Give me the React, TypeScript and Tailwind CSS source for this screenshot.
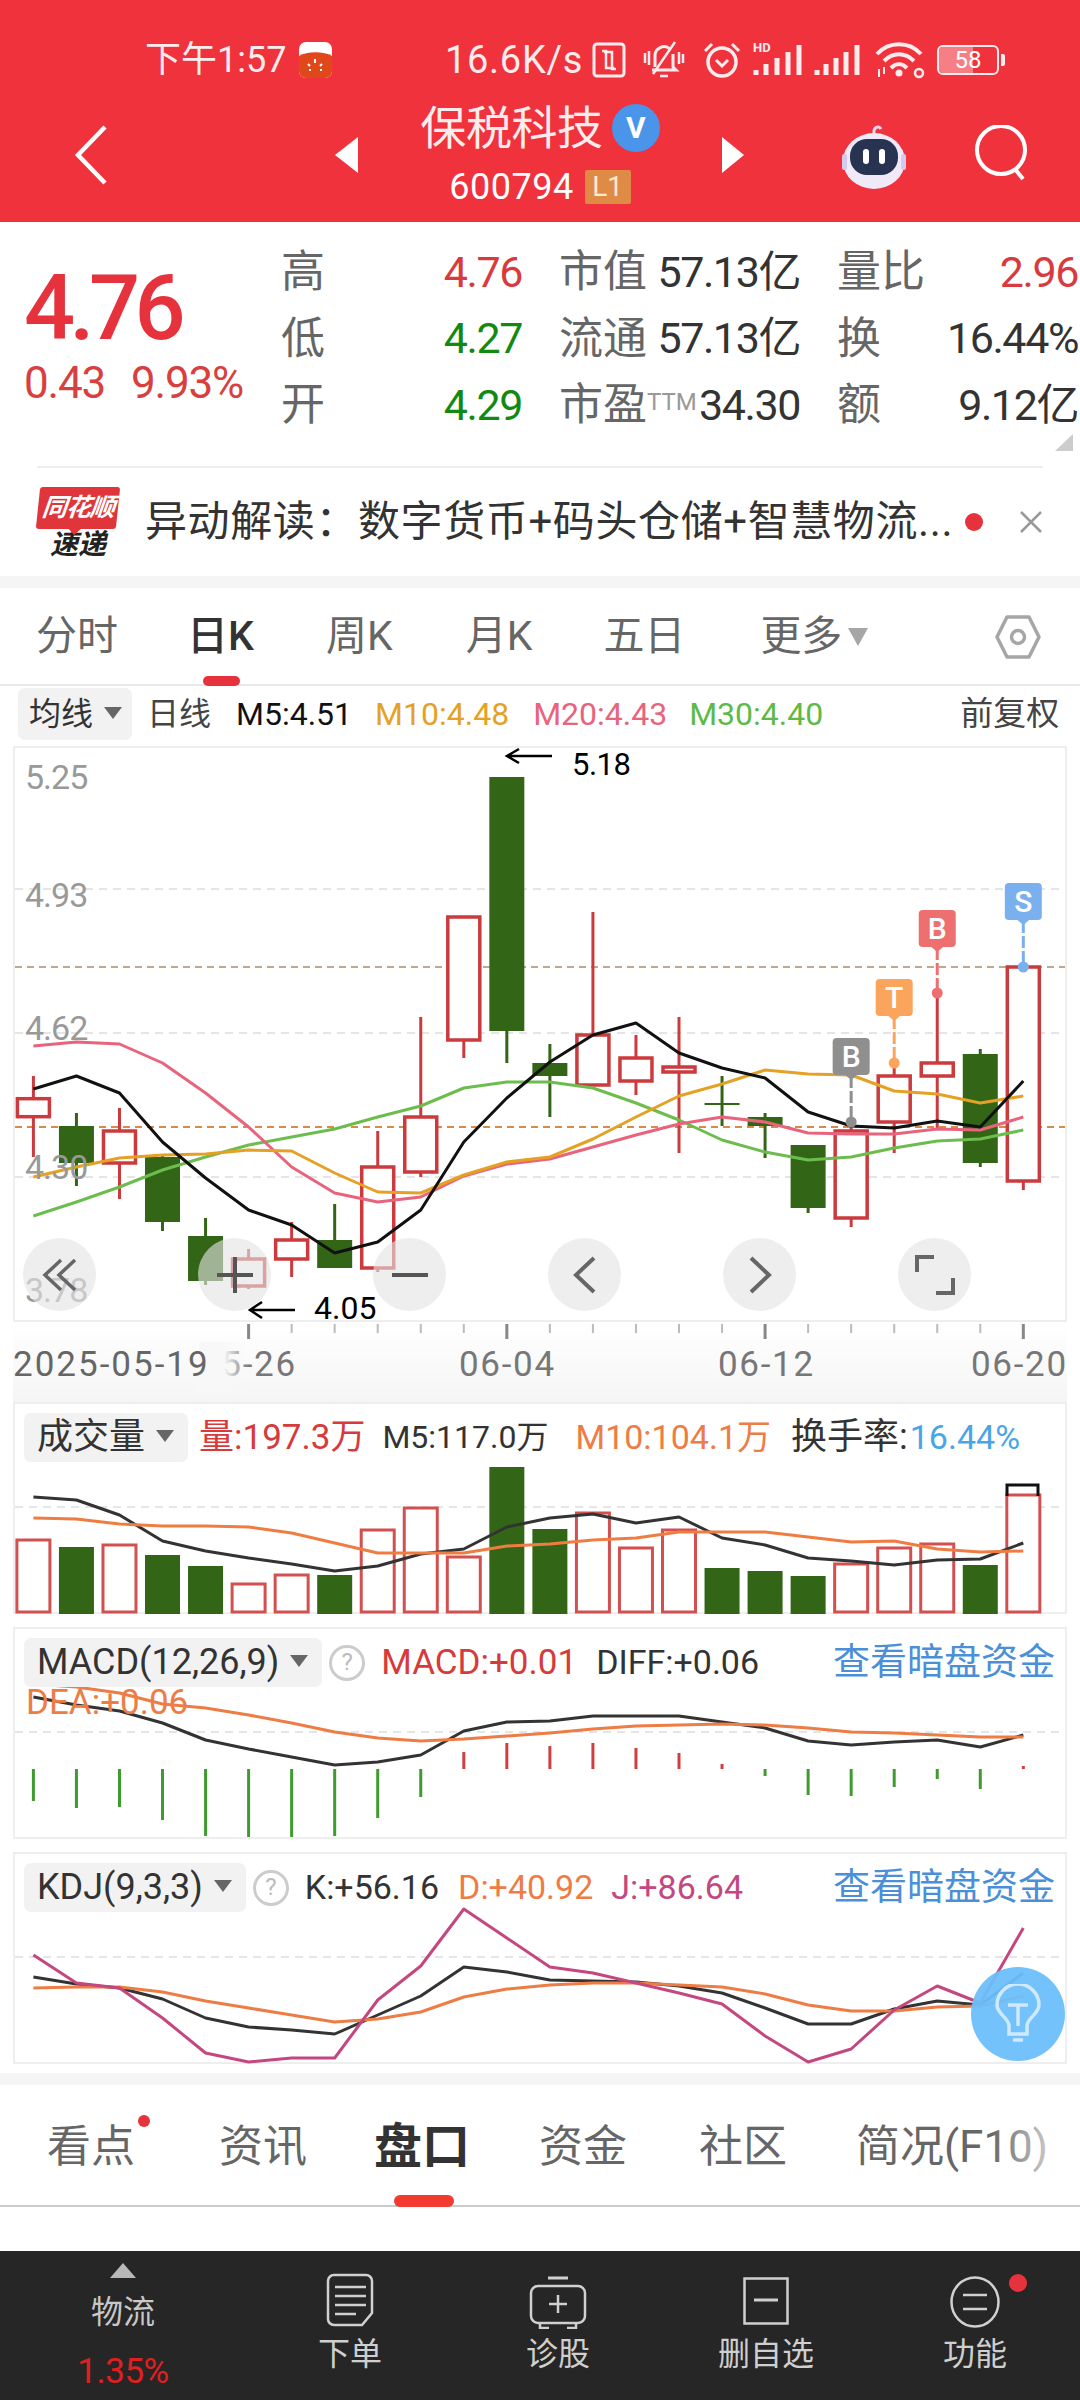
const cx = (i: number) => 33.4 + 43.04 * i;

type C = [number, number, number, number, 'r' | 'g'];
const candles: C[] = [
  [1098.7, 1116.7, 1076, 1157, 'r'], [1126, 1163, 1113, 1186, 'g'], [1131, 1163, 1108, 1199, 'r'], [1157, 1222, 1156, 1231, 'g'],
  [1236, 1281, 1218, 1285, 'g'], [1259, 1286, 1249, 1289, 'r'], [1240, 1259, 1222, 1277, 'r'], [1240, 1268, 1204, 1268, 'g'],
  [1167, 1268, 1131, 1272, 'r'], [1117, 1172, 1017, 1177, 'r'], [917, 1040, 917, 1058, 'r'], [777, 1031, 777, 1063, 'g'],
  [1063, 1076, 1044, 1117, 'g'], [1035, 1085, 912, 1085, 'r'], [1058, 1081, 1035, 1095, 'r'], [1067, 1072, 1017, 1153, 'r'],
  [1103, 1105, 1076, 1126, 'g'], [1117, 1126, 1113, 1158, 'g'], [1145, 1208, 1145, 1213, 'g'], [1131, 1218, 1127, 1227, 'r'],
  [1076, 1122, 1063, 1153, 'r'], [1063, 1076, 993, 1130, 'r'], [1054, 1163, 1049, 1167, 'g'], [967, 1181, 967, 1190, 'r'],
];
const ma5 = [1089, 1076, 1093, 1142, 1178, 1210, 1225, 1253, 1242, 1210, 1142, 1098, 1062, 1035, 1023, 1053, 1068, 1078, 1112, 1126, 1128, 1121, 1127, 1081];
const ma10 = [1177, 1167, 1158, 1155, 1154, 1150, 1151, 1173, 1192, 1193, 1175, 1162, 1157, 1139, 1117, 1096, 1084, 1070, 1074, 1075, 1091, 1094, 1103, 1096];
const ma20 = [1046, 1042, 1044, 1063, 1093, 1127, 1167, 1193, 1202, 1197, 1176, 1164, 1159, 1147, 1135, 1124, 1117, 1122, 1133, 1134, 1134, 1129, 1130, 1117];
const ma30 = [1216, 1202, 1187, 1170, 1157, 1145, 1137, 1129, 1117, 1106, 1088, 1082, 1082, 1088, 1103, 1120, 1140, 1152, 1160, 1157, 1148, 1141, 1139, 1130];
const volTops: [number, 'r' | 'g'][] = [[1540, 'r'], [1547, 'g'], [1545, 'r'], [1555, 'g'], [1566, 'g'], [1584, 'r'], [1575, 'r'], [1575, 'g'], [1530, 'r'], [1508, 'r'], [1557, 'r'], [1467, 'g'], [1529, 'g'], [1513, 'r'], [1548, 'r'], [1530, 'r'], [1568, 'g'], [1571, 'g'], [1576, 'g'], [1564, 'r'], [1548, 'r'], [1544, 'r'], [1565, 'g'], [1495, 'r']];
const volM5 = [1497, 1500, 1515, 1541, 1551, 1558, 1564, 1571, 1566, 1554, 1549, 1527, 1518, 1514, 1523, 1517, 1538, 1545, 1558, 1561, 1565, 1560, 1559, 1543];
const volM10 = [1518, 1519, 1524, 1526, 1526, 1527, 1533, 1543, 1553, 1553, 1553, 1546, 1544, 1540, 1538, 1532, 1532, 1532, 1537, 1542, 1541, 1549, 1552, 1551];
const macdBars = [1801, 1808, 1807, 1820, 1836, 1837, 1837, 1836, 1818, 1797, 1752, 1743, 1746, 1743, 1748, 1753, 1764, 1776, 1795, 1796, 1787, 1779, 1789, 1766];
const diff = [1697, 1705, 1711, 1723, 1740, 1749, 1757, 1765, 1762, 1755, 1731, 1722, 1721, 1716, 1716, 1716, 1722, 1728, 1741, 1745, 1742, 1740, 1747, 1735];
const dea = [1684, 1687, 1693, 1704, 1708, 1715, 1723, 1732, 1738, 1741, 1739, 1736, 1733, 1729, 1726, 1725, 1724, 1725, 1728, 1732, 1733, 1735, 1737, 1737];
const kLine = [1977, 1984, 1988, 1999, 2018, 2027, 2030, 2034, 2015, 1996, 1967, 1972, 1980, 1981, 1982, 1986, 1993, 2008, 2024, 2024, 2009, 2001, 2005, 1973];
const dLine = [1988, 1987, 1987, 1992, 2001, 2008, 2015, 2022, 2019, 2012, 1997, 1989, 1985, 1983, 1983, 1985, 1987, 1994, 2005, 2011, 2011, 2007, 2006, 1996];
const jLine = [1955, 1983, 1988, 2018, 2053, 2062, 2058, 2058, 2000, 1966, 1909, 1938, 1967, 1973, 1983, 1993, 2004, 2036, 2062, 2049, 2010, 1986, 2003, 1928];

const RED = '#cb3a3c';
const GREEN = '#336516';

function Poly({ ys, color, w = 3 }: { ys: number[]; color: string; w?: number }) {
  return <polyline fill="none" stroke={color} strokeWidth={w} strokeLinejoin="round" points={ys.map((y, i) => `${cx(i)},${y}`).join(' ')} />;
}

function Marker({ i, top, bg, letter, dot }: { i: number; top: number; bg: string; letter: string; dot: number }) {
  const x = cx(i);
  return (
    <g>
      <line x1={x} x2={x} y1={top + 38} y2={dot} stroke={bg} strokeWidth={3} strokeDasharray="12 3" />
      <circle cx={x} cy={dot} r={5.5} fill={bg} />
      <rect x={x - 18.5} y={top} width={37} height={37} rx={4} fill={bg} />
      <path d={`M${x - 7} ${top + 36}L${x} ${top + 42}L${x + 7} ${top + 36}Z`} fill={bg} />
      <text x={x} y={top + 29} textAnchor="middle" fontSize={30} fontWeight={500} fill="#fff" fontFamily="Roboto">{letter}</text>
    </g>
  );
}

function MainChart() {
  return (
    <svg className="block" width={1054} height={576} viewBox="13 746 1054 576">
      {[889, 1033, 1177].map((y) => <line key={y} x1={15} x2={1065} y1={y} y2={y} stroke="#ddd" strokeWidth={1.5} strokeDasharray="8 6" />)}
      <line x1={15} x2={1065} y1={967} y2={967} stroke="#bfa98a" strokeWidth={2} strokeDasharray="7 5" />
      <line x1={15} x2={1065} y1={1127} y2={1127} stroke="#d98a45" strokeWidth={2} strokeDasharray="7 5" />
      {candles.map(([t, b, wt, wb, k], i) => {
        const x = cx(i);
        const col = k === 'r' ? RED : GREEN;
        return (
          <g key={i}>
            <line x1={x} x2={x} y1={wt} y2={wb} stroke={col} strokeWidth={3} />
            {k === 'r'
              ? <rect x={x - 16} y={t} width={32} height={b - t} fill="#fff" stroke={col} strokeWidth={3.5} />
              : <rect x={x - 17.5} y={t} width={35} height={Math.max(b - t, 2)} fill={col} />}
          </g>
        );
      })}
      <Poly ys={ma30} color="#6dbd4e" />
      <Poly ys={ma20} color="#e8647c" />
      <Poly ys={ma10} color="#e5a124" />
      <Poly ys={ma5} color="#111" />
      <Marker i={19} top={1038} bg="#8f8f8f" letter="B" dot={1122} />
      <Marker i={20} top={979} bg="#fba45c" letter="T" dot={1063} />
      <Marker i={21} top={910} bg="#ee6f70" letter="B" dot={993} />
      <Marker i={23} top={883} bg="#7bb0ee" letter="S" dot={967} />
      <path d="M552 756H508M519 749L507 756L519 763" fill="none" stroke="#000" strokeWidth={2.5} />
      <path d="M295 1310H250M262 1302L250 1310L262 1318" fill="none" stroke="#000" strokeWidth={2.5} />
    </svg>
  );
}

function CircleBtn({ left, children }: { left: string; children: React.ReactNode }) {
  return <div className={`absolute top-[492px] w-[73px] h-[73px] rounded-full bg-[rgba(228,228,228,0.62)] flex items-center justify-center ${left}`}>{children}</div>;
}

function Arrow() {
  return <svg width="18" height="12" viewBox="0 0 18 12"><path d="M0 0H18L9 12Z" fill="#666" /></svg>;
}

function Chip({ children }: { children: React.ReactNode }) {
  return (
    <div className="h-[49px] rounded-[7px] bg-[#f2f2f2] pl-[13px] pr-[14px] flex items-center gap-[11px] text-[36px] text-[#333] shrink-0">
      <span className="whitespace-nowrap">{children}</span>
      <span className="flex -mt-[4px]"><Arrow /></span>
    </div>
  );
}

function Help() {
  return (
    <div className="w-[36px] h-[36px] rounded-full border-[3px] border-[#ccc] flex items-center justify-center text-[24px] text-[#bbb] shrink-0">?</div>
  );
}

function Panel({ h, svg, children }: { h: string; svg: React.ReactNode; children: React.ReactNode }) {
  return (
    <div className={`relative ml-[13px] w-[1054px] shadow-[inset_0_0_0_2px_#eeeeee] ${h}`}>
      <div className="absolute inset-0">{svg}</div>
      <div className="relative flex items-center pt-[11px] pl-[11px] pr-[12px] whitespace-nowrap text-[34px] leading-[49px]">{children}</div>
    </div>
  );
}

function VolChart() {
  return (
    <svg className="block" width={1054} height={212} viewBox="13 1402 1054 212">
      <line x1={15} x2={1065} y1={1507} y2={1507} stroke="#ddd" strokeWidth={1.5} strokeDasharray="8 6" />
      {volTops.map(([t, k], i) => k === 'r'
        ? <rect key={i} x={cx(i) - 16.5} y={t} width={33} height={1612 - t} fill="#fff" stroke="#d2504f" strokeWidth={3} />
        : <rect key={i} x={cx(i) - 17.5} y={t} width={35} height={1614 - t} fill={GREEN} />)}
      <path d="M1007 1496V1485H1038V1496" fill="none" stroke="#111" strokeWidth={3} />
      <Poly ys={volM5} color="#333" />
      <Poly ys={volM10} color="#ef7d42" />
    </svg>
  );
}

function MacdChart() {
  return (
    <svg className="block" width={1054} height={212} viewBox="13 1627 1054 212">
      <line x1={15} x2={1065} y1={1732} y2={1732} stroke="#ddd" strokeWidth={1.5} strokeDasharray="8 6" />
      {macdBars.map((y, i) => {
        const up = y < 1769;
        return <line key={i} x1={cx(i)} x2={cx(i)} y1={1769} y2={y} stroke={up ? '#cf3f3f' : '#3f9a2f'} strokeWidth={3} />;
      })}
      <Poly ys={diff} color="#333" />
      <Poly ys={dea} color="#ee7c45" />
    </svg>
  );
}

function KdjChart() {
  return (
    <svg className="block" width={1054} height={212} viewBox="13 1852 1054 212">
      <line x1={15} x2={1065} y1={1957} y2={1957} stroke="#ddd" strokeWidth={1.5} strokeDasharray="8 6" />
      <Poly ys={kLine} color="#333" />
      <Poly ys={dLine} color="#ee7c45" />
      <Poly ys={jLine} color="#c4477f" />
    </svg>
  );
}

function StatusIcons() {
  const c = '#fdeced';
  return (
    <div className="flex items-center">
      <svg width="34" height="36" viewBox="0 0 34 36" className="ml-[10px]"><rect x="2" y="2" width="30" height="32" rx="3" fill="none" stroke={c} strokeWidth="3" /><path d="M10 9H14V26H22M24 27H20V10H12" fill="none" stroke={c} strokeWidth="2.5" /></svg>
      <svg width="44" height="40" viewBox="0 0 44 40" className="ml-[16px]"><path d="M13 27V16a9 9 0 0 1 15-7M31 14V27l3 3H10" fill="none" stroke={c} strokeWidth="3" /><path d="M33 2L11 34M18 36h8M3 13v10M7 11v14M37 12v12M41 14v9" stroke={c} strokeWidth="2.5" fill="none" /></svg>
      <svg width="42" height="38" viewBox="0 0 42 38" className="ml-[15px]"><circle cx="21" cy="21" r="14" fill="none" stroke={c} strokeWidth="3.5" /><path d="M4 10L11 3M38 10L31 3M15 19L21 25L27 19" fill="none" stroke={c} strokeWidth="3" /></svg>
      <div className="relative w-[50px] h-[34px] ml-[10px]">
        <span className="absolute left-0 -top-[2px] text-[13px] leading-[14px] font-bold text-[#fdeced]">HD</span>
        <svg width="50" height="34" viewBox="0 0 50 34" className="absolute left-0 top-0"><path d="M3 27V32M13 21V32M24 15V32M35 9V32M46 2V32" stroke={c} strokeWidth="5" fill="none" /></svg>
      </div>
      <svg width="48" height="34" viewBox="0 0 48 34" className="ml-[11px]"><path d="M3 27V32M12 21V32M22 15V32M32 9V32M43 2V32" stroke={c} strokeWidth="5" fill="none" /></svg>
      <svg width="50" height="38" viewBox="0 0 50 38" className="ml-[13px]"><path d="M2 13C14 0 34 0 46 13M9 20C18 11 30 11 39 20M16 27C21 22 27 22 32 27" fill="none" stroke={c} strokeWidth="4" /><circle cx="24" cy="32" r="3.5" fill={c} /><path d="M4 28V36M9 26V33" stroke={c} strokeWidth="2" /><circle cx="44" cy="32" r="4" fill="none" stroke={c} strokeWidth="2.5" /></svg>
      <div className="relative w-[68px] h-[30px] ml-[12px]">
        <div className="absolute left-0 top-0 w-[62px] h-[30px] rounded-[6px] border-2 border-[#fdeced] overflow-hidden">
          <div className="w-[34px] h-full bg-[#f57f84]" />
        </div>
        <div className="absolute left-0 top-0 w-[62px] h-[30px] leading-[30px] text-center text-[24px] text-[#fff]">58</div>
        <div className="absolute right-0 top-[9px] w-[4px] h-[12px] rounded-r-[2px] bg-[#fdeced]" />
      </div>
    </div>
  );
}

function Header() {
  return (
    <header className="h-[222px] bg-[#f0323c] text-white">
      <div className="h-[90px] pt-[30px] flex items-center pl-[145px]">
        <span className="text-[36px] leading-none text-[#fdeced] w-[154px] whitespace-nowrap">下午1:57</span>
        <svg width="33" height="36" viewBox="0 0 33 36">
          <rect x="0" y="0" width="33" height="36" rx="7" fill="#fff" />
          <path d="M0 14C8 9 25 9 33 14V29a7 7 0 0 1-7 7H7a7 7 0 0 1-7-7Z" fill="#e0481c" />
          <path d="M16 17v4M9 22l2 2M23 22l-2 2M10 28h2M21 28h2" stroke="#fff" strokeWidth="2" />
        </svg>
        <span className="text-[38px] leading-none ml-[113px] w-[137px] text-[#fdeced] tracking-[0.7px] whitespace-nowrap">16.6K/s</span>
        <StatusIcons />
      </div>
      <nav className="flex items-start h-[132px]">
        <svg width="36" height="62" viewBox="0 0 36 62" className="ml-[73px] mt-[34px]"><path d="M32 3L5 31L32 59" fill="none" stroke="#fff" strokeWidth="4.5" /></svg>
        <svg width="23" height="36" viewBox="0 0 23 36" className="ml-[226px] mt-[47px]"><path d="M23 0V36L0 18Z" fill="#fff" /></svg>
        <div className="w-[364px] flex flex-col items-center">
          <div className="flex items-center h-[60px] mt-[8px]">
            <span className="text-[46px] leading-none tracking-[-0.4px] text-[#fdeced]">保税科技</span>
            <span className="ml-[9px] w-[48px] h-[48px] rounded-full bg-[#4a94ea] flex items-center justify-center text-[30px] font-bold leading-none">V</span>
          </div>
          <div className="flex items-center h-[36px] mt-[11px]">
            <span className="text-[36px] leading-none tracking-[0.5px]">600794</span>
            <span className="ml-[11px] w-[46px] h-[34px] bg-[#e08b45] rounded-[2px] text-[28px] leading-[34px] text-center text-[#fde9d4]">L1</span>
          </div>
        </div>
        <svg width="23" height="36" viewBox="0 0 23 36" className="mt-[47px]"><path d="M0 0V36L22 18Z" fill="#fff" /></svg>
        <svg width="68" height="66" viewBox="0 0 68 66" className="ml-[95px] mt-[34px]">
          <path d="M34 10C33 3 39 1 41 5" fill="none" stroke="#e8d8f0" strokeWidth="3" />
          <ellipse cx="34" cy="37" rx="31" ry="28" fill="#f0eaf8" />
          <rect x="2" y="30" width="5" height="16" rx="2" fill="#d7c8ee" />
          <rect x="61" y="30" width="5" height="16" rx="2" fill="#d7c8ee" />
          <rect x="10" y="15" width="48" height="36" rx="17" fill="#283352" />
          <rect x="23" y="25" width="6" height="15" rx="3" fill="#fff" />
          <rect x="39" y="25" width="6" height="15" rx="3" fill="#fff" />
        </svg>
        <svg width="56" height="56" viewBox="0 0 56 56" className="ml-[66px] mt-[35px]"><circle cx="27" cy="25" r="24" fill="none" stroke="#fff" strokeWidth="4" /><path d="M41 44L49 54" stroke="#fff" strokeWidth="4" /></svg>
      </nav>
    </header>
  );
}

function Cell({ label, value, cls }: { label: React.ReactNode; value: string; cls: string }) {
  return (
    <div className="w-[240px] flex items-center justify-between">
      <span className="text-[44px] text-[#666] leading-none whitespace-nowrap -ml-[1px]">{label}</span>
      <span className={`text-[43px] leading-none tracking-[-1.4px] whitespace-nowrap ${cls}`}>{value}</span>
    </div>
  );
}

function Quote() {
  return (
    <section className="h-[354px] relative">
      <div className="h-[244px] flex">
        <div className="w-[282px] pl-[24px] pt-[42px]">
          <div className="text-[90px] leading-[90px] font-medium text-[#e5323c] tracking-[-5.6px]">4.76</div>
          <div className="text-[44px] leading-[40px] text-[#d8403f] tracking-[-1.2px] mt-[9px] whitespace-nowrap">0.43<span className="ml-[26px]">9.93%</span></div>
        </div>
        <div className="pt-[17px] grid grid-cols-[240px_240px_240px] gap-x-[38px] grid-rows-[66.5px_66.5px_66.5px]">
          <Cell label="高" value="4.76" cls="text-[#d93a3e]" />
          <Cell label={<>市值</>} value="57.13亿" cls="text-[#333]" />
          <Cell label="量比" value="2.96" cls="text-[#d93a3e]" />
          <Cell label="低" value="4.27" cls="text-[#128a12]" />
          <Cell label="流通" value="57.13亿" cls="text-[#333]" />
          <Cell label="换" value="16.44%" cls="text-[#333]" />
          <Cell label="开" value="4.29" cls="text-[#128a12]" />
          <Cell label={<>市盈<sup className="text-[24px] text-[#999] -top-[10px] relative align-baseline">TTM</sup></>} value="34.30" cls="text-[#333]" />
          <Cell label="额" value="9.12亿" cls="text-[#333]" />
        </div>
      </div>
      <svg width="18" height="17" viewBox="0 0 18 17" className="absolute left-[1055px] top-[212px]"><path d="M18 0V17H0Z" fill="#ccc" /></svg>
      <div className="mx-[37px] h-[2px] bg-[#eeeeee]" />
      <div className="h-[108px] flex items-center">
        <div className="ml-[38px] w-[80px] flex flex-col items-center mt-[2px]">
          <div className="relative w-[80px] h-[42px] bg-[#e0353a] rounded-[3px] -skew-x-6 text-[25px] leading-[42px] text-center text-white font-bold italic tracking-[-1px]">
            同花顺
            <div className="absolute left-[32px] -bottom-[6px] w-0 h-0 border-l-[7px] border-r-[7px] border-t-[7px] border-l-transparent border-r-transparent border-t-[#e0353a]" />
          </div>
          <div className="text-[28px] leading-[28px] font-bold italic text-[#222] mt-[2px]">速递</div>
        </div>
        <span className="ml-[27px] w-[806px] shrink-0 text-[42px] leading-none text-[#333] tracking-[0.6px] whitespace-nowrap">异动解读：数字货币+码头仓储+智慧物流...</span>
        <span className="ml-[14px] w-[18px] h-[18px] rounded-full bg-[#e5323c] shrink-0" />
        <svg width="24" height="24" viewBox="0 0 24 24" className="ml-[36px]"><path d="M2 2L22 22M22 2L2 22" stroke="#999" strokeWidth="2.5" /></svg>
      </div>
    </section>
  );
}

function KTabs() {
  const grey = 'text-[41px] leading-none text-[#666] whitespace-nowrap';
  return (
    <div className="h-[98px] border-b-2 border-[#e8e8e8] flex items-center relative pt-[1px]">
      <span className={`${grey} ml-[36px]`}>分时</span>
      <span className="text-[41px] leading-none text-[#333] font-medium ml-[69px] whitespace-nowrap">日K</span>
      <span className={`${grey} ml-[72px]`}>周K</span>
      <span className={`${grey} ml-[73px]`}>月K</span>
      <span className={`${grey} ml-[71px]`}>五日</span>
      <span className={`${grey} ml-[75px]`}>更多</span>
      <svg width="20" height="18" viewBox="0 0 20 18" className="ml-[6px]"><path d="M0 0H20L10 18Z" fill="#a6a6a6" /></svg>
      <svg width="46" height="44" viewBox="0 0 46 44" className="ml-[127px]"><path d="M12 2H34L44 22L34 42H12L2 22Z" fill="none" stroke="#a6a6a6" strokeWidth="3.5" strokeLinejoin="round" /><circle cx="23" cy="22" r="6.5" fill="none" stroke="#a6a6a6" strokeWidth="3.5" /></svg>
      <div className="absolute left-[203px] -bottom-[2px] w-[37px] h-[10px] rounded-full bg-[#e5323c]" />
    </div>
  );
}

function MaRow() {
  return (
    <div className="h-[60px] flex items-start pt-[2px] whitespace-nowrap">
      <div className="ml-[18px] w-[114px] h-[52px] rounded-[7px] bg-[#f2f2f2] flex items-center pl-[11px] gap-[11px] text-[32px] text-[#333]">
        均线<span className="flex -mt-[2px]"><Arrow /></span>
      </div>
      <span className="ml-[15px] text-[32px] leading-[52px] text-[#444]">日线</span>
      <span className="ml-[25px] text-[32px] leading-[52px] text-[#111]">M5:4.51</span>
      <span className="ml-[23px] text-[32px] leading-[52px] text-[#e5a124]">M10:4.48</span>
      <span className="ml-[24px] text-[32px] leading-[52px] text-[#e8647c]">M20:4.43</span>
      <span className="ml-[22px] text-[32px] leading-[52px] text-[#5fba45]">M30:4.40</span>
      <span className="ml-[137px] text-[33px] leading-[52px] text-[#444]">前复权</span>
    </div>
  );
}

function Chart() {
  const lab = 'absolute left-[12px] text-[34px] leading-none text-[#999] tracking-[-1px]';
  return (
    <div className="relative ml-[13px] w-[1054px] h-[576px] shadow-[inset_0_0_0_2px_#eeeeee]">
      <MainChart />
      <span className={`${lab} top-[14px]`}>5.25</span>
      <span className={`${lab} top-[132px]`}>4.93</span>
      <span className={`${lab} top-[265px]`}>4.62</span>
      <span className={`${lab} top-[404px]`}>4.30</span>
      <span className={`${lab} top-[527px]`}>3.78</span>
      <span className="absolute left-[559px] top-[3px] text-[31px] leading-none text-black tracking-[-0.5px]">5.18</span>
      <span className="absolute left-[301px] top-[546px] text-[32px] leading-none text-black">4.05</span>
      <CircleBtn left="left-[10px]"><svg width="36" height="36" viewBox="0 0 36 36"><path d="M19 3L3 18L19 33M33 3L17 18L33 33" fill="none" stroke="#666" strokeWidth="3.5" /></svg></CircleBtn>
      <CircleBtn left="left-[185px]"><svg width="36" height="36" viewBox="0 0 36 36"><path d="M0 18H36M18 0V36" stroke="#555" strokeWidth="4" /></svg></CircleBtn>
      <CircleBtn left="left-[360px]"><svg width="36" height="6" viewBox="0 0 36 6"><path d="M0 3H36" stroke="#555" strokeWidth="4" /></svg></CircleBtn>
      <CircleBtn left="left-[535px]"><svg width="24" height="38" viewBox="0 0 24 38"><path d="M21 2L3 19L21 36" fill="none" stroke="#666" strokeWidth="4" /></svg></CircleBtn>
      <CircleBtn left="left-[710px]"><svg width="24" height="38" viewBox="0 0 24 38"><path d="M3 2L21 19L3 36" fill="none" stroke="#666" strokeWidth="4" /></svg></CircleBtn>
      <CircleBtn left="left-[885px]"><svg width="40" height="40" viewBox="0 0 40 40"><path d="M2 17V2H19M38 23V38H21" fill="none" stroke="#666" strokeWidth="4" /></svg></CircleBtn>
    </div>
  );
}

function Axis() {
  const big = [5, 11, 17, 23];
  const d = 'absolute top-[25px] text-[35px] leading-none text-[#777] tracking-[1.7px] whitespace-nowrap';
  return (
    <div className="relative ml-[13px] w-[1054px] h-[80px] bg-gradient-to-b from-white to-[#f5f5f5]">
      <svg className="absolute left-0 top-0" width={1054} height={18} viewBox="13 1320 1054 18">
        {candles.map((_, i) => i >= 5 && <line key={i} x1={cx(i)} x2={cx(i)} y1={1322} y2={big.includes(i) ? 1337 : 1331} stroke={big.includes(i) ? '#888' : '#bbb'} strokeWidth={big.includes(i) ? 3 : 2} />)}
      </svg>
      <span className={`${d} left-[187px]`}>05-26</span>
      <div className="absolute left-[186px] top-[20px] w-[50px] h-[50px] bg-gradient-to-r from-[#f8f8f8] via-[#f8f8f8] to-transparent" />
      <span className="absolute left-0 top-[25px] text-[35px] leading-none text-[#666] tracking-[2px] whitespace-nowrap">2025-05-19</span>
      <span className={`${d} left-[446px]`}>06-04</span>
      <span className={`${d} left-[705px]`}>06-12</span>
      <span className={`${d} left-[958px]`}>06-20</span>
    </div>
  );
}

function Bulb() {
  return (
    <div className="absolute left-[958px] top-[115px] w-[94px] h-[94px] rounded-full bg-[#6bbffb]/95 flex items-center justify-center">
      <svg width="46" height="60" viewBox="0 0 46 60"><path d="M14 42C14 34 2 30 2 21A21 21 0 0 1 44 21C44 30 32 34 32 42V50H14ZM13 21H33M23 21V42M14 50H32M18 56H28" fill="none" stroke="#cfeaff" strokeWidth="3.5" /></svg>
    </div>
  );
}

function BottomTabs() {
  const t = 'text-[44px] leading-none text-[#666] whitespace-nowrap';
  return (
    <div className="h-[122px] border-b-2 border-[#cccccc] flex items-center relative pt-[3px]">
      <span className={`${t} ml-[47px]`}>看点</span>
      <span className={`${t} ml-[84px]`}>资讯</span>
      <span className="text-[48px] leading-none font-bold text-[#333] ml-[67px] whitespace-nowrap">盘口</span>
      <span className={`${t} ml-[69px]`}>资金</span>
      <span className={`${t} ml-[72px]`}>社区</span>
      <span className={`${t} ml-[69px]`}>简况(F10)</span>
      <div className="absolute left-[138px] top-[30px] w-[12px] h-[12px] rounded-full bg-[#e5323c]" />
      <div className="absolute left-[394px] -bottom-[2px] w-[60px] h-[12px] rounded-full bg-[#f23a30]" />
      <div className="absolute right-0 top-[30px] w-[90px] h-[60px] bg-gradient-to-r from-transparent to-white" />
    </div>
  );
}

function BottomItem({ icon, label, extra }: { icon: React.ReactNode; label: string; extra?: React.ReactNode }) {
  return (
    <div className="relative flex flex-col items-center">
      <div className="h-[86px] pt-[22px] flex items-start">{icon}</div>
      <span className="text-[32px] leading-none text-[#cfcfcf] mt-[1px]">{label}</span>
      {extra}
    </div>
  );
}

function BottomBar() {
  const s = '#d0d0d0';
  return (
    <footer className="h-[149px] bg-[#262626] grid grid-cols-[246px_208px_208px_208px_210px]">
      <div className="flex flex-col items-center pt-[12px]">
        <svg width="26" height="15" viewBox="0 0 26 15"><path d="M13 0L26 15H0Z" fill="#b8b8b8" /></svg>
        <span className="text-[32px] leading-none text-[#c8c8c8] mt-[18px]">物流</span>
        <span className="text-[35px] leading-none text-[#e02020] mt-[26px] tracking-[-0.5px]">1.35%</span>
      </div>
      <BottomItem label="下单" icon={<svg width="48" height="54" viewBox="0 0 48 54"><path d="M8 2H40a6 6 0 0 1 6 6V40L36 52H8a6 6 0 0 1-6-6V8a6 6 0 0 1 6-6Z" fill="none" stroke={s} strokeWidth="2.5" /><path d="M9 14H40M9 23H40M9 32H40M9 41H30" stroke={s} strokeWidth="2.5" /></svg>} />
      <BottomItem label="诊股" icon={<svg width="58" height="54" viewBox="0 0 58 54" className="mt-[2px]"><path d="M19 3H39" stroke={s} strokeWidth="3" /><rect x="2" y="11" width="54" height="37" rx="7" fill="none" stroke={s} strokeWidth="2.5" /><path d="M29 20V38M20 29H38M11 48V53H20M47 48V53H38" fill="none" stroke={s} strokeWidth="2.5" /></svg>} />
      <BottomItem label="删自选" icon={<svg width="46" height="48" viewBox="0 0 46 48" className="mt-[4px]"><rect x="1.5" y="1.5" width="43" height="45" fill="none" stroke={s} strokeWidth="2.5" /><path d="M11 23H35" stroke={s} strokeWidth="3" /></svg>} />
      <BottomItem label="功能" icon={<svg width="50" height="52" viewBox="0 0 50 52" className="mt-[3px]"><ellipse cx="25" cy="26" rx="23.5" ry="24.5" fill="none" stroke={s} strokeWidth="2.5" /><path d="M13 19H37M13 33H37" stroke={s} strokeWidth="2.5" /></svg>} extra={<div className="absolute left-[139px] top-[23px] w-[18px] h-[18px] rounded-full bg-[#e5323c]" />} />
    </footer>
  );
}

export default function App() {
  return (
    <div className="w-[1080px] h-[2400px] overflow-hidden bg-white [font-family:Roboto,'Noto_Sans_CJK_SC',sans-serif]">
      <Header />
      <Quote />
      <div className="h-[12px] bg-[#f5f5f5]" />
      <KTabs />
      <MaRow />
      <Chart />
      <Axis />
      <Panel h="h-[212px]" svg={<VolChart />}>
        <Chip>成交量</Chip>
        <span className="ml-[11px] text-[35px] text-[#d63a3a]">量:197.3万</span>
        <span className="ml-[17px] text-[32px] text-[#333]">M5:117.0万</span>
        <span className="ml-[27px] text-[#ee7c45]">M10:104.1万</span>
        <span className="ml-[20px] text-[36px] text-[#333]">换手率:</span>
        <span className="ml-[2px] text-[#47a5e8]">16.44%</span>
      </Panel>
      <div className="h-[13px]" />
      <Panel h="h-[212px]" svg={<MacdChart />}>
        <Chip>MACD(12,26,9)</Chip>
        <span className="ml-[7px]"><Help /></span>
        <span className="ml-[16px] text-[35px] text-[#d63a3a]">MACD:+0.01</span>
        <span className="ml-[19px] text-[34px] text-[#333]">DIFF:+0.06</span>
        <span className="ml-auto text-[37px] text-[#4a8fd8]">查看暗盘资金</span>
        <span className="absolute left-[13px] top-[58px] text-[35px] leading-none text-[#ee7c45]">DEA:+0.06</span>
      </Panel>
      <div className="h-[13px]" />
      <Panel h="h-[212px]" svg={<KdjChart />}>
        <Chip>KDJ(9,3,3)</Chip>
        <span className="ml-[7px]"><Help /></span>
        <span className="ml-[16px] text-[#333]">K:+56.16</span>
        <span className="ml-[19px] text-[#ee7c45]">D:+40.92</span>
        <span className="ml-[18px] text-[#c4477f]">J:+86.64</span>
        <span className="ml-auto text-[37px] text-[#4a8fd8]">查看暗盘资金</span>
        <Bulb />
      </Panel>
      <div className="h-[9px]" />
      <div className="h-[12px] bg-[#f5f5f5]" />
      <BottomTabs />
      <div className="h-[44px]" />
      <BottomBar />
    </div>
  );
}
